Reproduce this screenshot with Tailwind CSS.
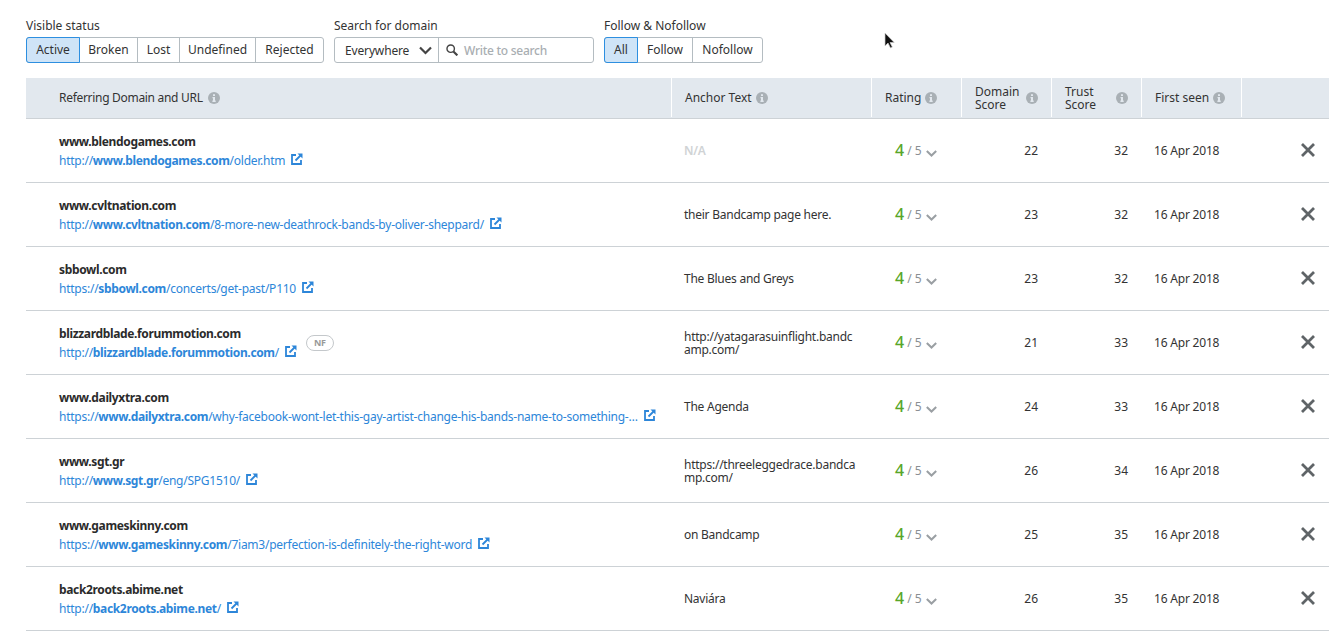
<!DOCTYPE html>
<html lang="en">
<head>
    <meta charset="UTF-8">
    <title>Backlinks</title>
    <script src="https://cdn.jsdelivr.net/npm/@tailwindcss/browser@4"></script>
</head>
<body class="relative h-[634px] overflow-hidden bg-white font-['Noto_Sans',sans-serif] text-[12px] text-[#333]">
    <!-- filters -->
    <div class="flex pl-[26px] pt-[18px] h-[78px]">
        <div class="w-[308px]">
            <div class="h-[19px] leading-[15px]">Visible status</div>
            <div class="flex h-[26px] w-[298px] rounded-[3px] border border-[#b4bcc1] leading-[24px] text-center">
                <div class="w-[54px] -my-px -ml-px rounded-l-[3px] border border-[#2d8fe0] bg-[#cfe4f7] leading-[24px]">Active</div>
                <div class="w-[58px] border-r border-[#b4bcc1]">Broken</div>
                <div class="w-[42px] border-r border-[#b4bcc1]">Lost</div>
                <div class="w-[76px] border-r border-[#b4bcc1]">Undefined</div>
                <div class="flex-1">Rejected</div>
            </div>
        </div>
        <div class="w-[270px]">
            <div class="h-[19px] leading-[15px]">Search for domain</div>
            <div class="flex h-[26px] w-[260px] rounded-[3px] border border-[#b4bcc1] leading-[25px]">
                <div class="flex w-[104px] items-center justify-between border-r border-[#b4bcc1] pl-[10px] pr-[6px] tracking-[-0.15px]">
                    <span>Everywhere</span>
                    <svg width="13" height="9" viewBox="0 0 13 9" fill="none" stroke="#444" stroke-width="2.200"><path d="M1 1.500l5.500 5.500 5.500-5.500"/></svg>
                </div>
                <div class="flex flex-1 items-center pl-[7px] font-medium tracking-[-0.27px] text-[#a9aeb2]">
                    <svg width="12" height="12" viewBox="0 0 11 11" fill="none" stroke="#444" stroke-width="1.300" class="mr-[6px]"><circle cx="4.300" cy="4.300" r="3.400"/><path stroke-width="2" d="M6.800 6.800l3.600 3.600"/></svg>
                    Write to search
                </div>
            </div>
        </div>
        <div>
            <div class="h-[19px] leading-[15px]">Follow &amp; Nofollow</div>
            <div class="flex h-[26px] w-[159px] rounded-[3px] border border-[#b4bcc1] leading-[24px] text-center">
                <div class="w-[34px] -my-px -ml-px rounded-l-[3px] border border-[#2d8fe0] bg-[#cfe4f7]">All</div>
                <div class="w-[55px] border-r border-[#b4bcc1]">Follow</div>
                <div class="flex-1">Nofollow</div>
            </div>
        </div>
    </div>

    <!-- table -->
    <div class="ml-[26px] w-[1303px]">
        <div class="grid h-[41px] grid-cols-[646px_200px_90px_90px_90px_100px_87px] border-b border-[#cdd2d6] bg-[#e2e8ee] pb-px leading-[13px]">
            <div class="flex items-center border-r border-white pl-[33px] tracking-[-0.3px]">Referring Domain and URL<svg class="ml-[5px] size-[12px]" viewBox="0 0 12 12"><circle cx="6" cy="6" r="6" fill="#a9b0b5"/><path fill="#e2e8ee" d="M5 2.200h2v1.700H5zM4.500 5h2.500v3.600h.7V10H4.400V8.600H5V6.300H4.500z"/></svg></div>
            <div class="flex items-center border-r border-white pl-[13px]">Anchor Text<svg class="ml-[4px] size-[12px]" viewBox="0 0 12 12"><circle cx="6" cy="6" r="6" fill="#a9b0b5"/><path fill="#e2e8ee" d="M5 2.200h2v1.700H5zM4.500 5h2.500v3.600h.7V10H4.400V8.600H5V6.300H4.500z"/></svg></div>
            <div class="flex items-center border-r border-white pl-[13px]">Rating<svg class="ml-[4px] size-[12px]" viewBox="0 0 12 12"><circle cx="6" cy="6" r="6" fill="#a9b0b5"/><path fill="#e2e8ee" d="M5 2.200h2v1.700H5zM4.500 5h2.500v3.600h.7V10H4.400V8.600H5V6.300H4.500z"/></svg></div>
            <div class="flex items-center justify-between border-r border-white pl-[13px] pr-[13px]"><span class="w-[50px]">Domain Score</span><svg class="size-[12px]" viewBox="0 0 12 12"><circle cx="6" cy="6" r="6" fill="#a9b0b5"/><path fill="#e2e8ee" d="M5 2.200h2v1.700H5zM4.500 5h2.500v3.600h.7V10H4.400V8.600H5V6.300H4.500z"/></svg></div>
            <div class="flex items-center justify-between border-r border-white pl-[13px] pr-[13px]"><span class="w-[40px]">Trust Score</span><svg class="size-[12px]" viewBox="0 0 12 12"><circle cx="6" cy="6" r="6" fill="#a9b0b5"/><path fill="#e2e8ee" d="M5 2.200h2v1.700H5zM4.500 5h2.500v3.600h.7V10H4.400V8.600H5V6.300H4.500z"/></svg></div>
            <div class="flex items-center border-r border-white pl-[13px]">First seen<svg class="ml-[4px] size-[12px]" viewBox="0 0 12 12"><circle cx="6" cy="6" r="6" fill="#a9b0b5"/><path fill="#e2e8ee" d="M5 2.200h2v1.700H5zM4.500 5h2.500v3.600h.7V10H4.400V8.600H5V6.300H4.500z"/></svg></div>
            <div></div>
        </div>
        <div id="rows"></div>
    </div>

    <!-- mouse pointer -->
    <svg class="absolute left-[884px] top-[32px]" width="12" height="18" viewBox="0 0 12 18"><path d="M1 1v13l3-3 2.500 5 1.800-.9L6 10.500h4.200z" fill="#111" stroke="#ccc" stroke-width=".7"/></svg>

    <script>
        const rows = [
            ["www.blendogames.com", "http://", "www.blendogames.com", "/older.htm", "", "22", "32"],
            ["www.cvltnation.com", "http://", "www.cvltnation.com", "/8-more-new-deathrock-bands-by-oliver-sheppard/", "their Bandcamp page here.", "23", "32"],
            ["sbbowl.com", "https://", "sbbowl.com", "/concerts/get-past/P110", "The Blues and Greys", "23", "32"],
            ["blizzardblade.forummotion.com", "http://", "blizzardblade.forummotion.com", "/", "http://yatagarasuinflight.bandcamp.com/", "21", "33", true],
            ["www.dailyxtra.com", "https://", "www.dailyxtra.com", "/why-facebook-wont-let-this-gay-artist-change-his-bands-name-to-something-…", "The Agenda", "24", "33"],
            ["www.sgt.gr", "http://", "www.sgt.gr", "/eng/SPG1510/", "https://threeleggedrace.bandcamp.com/", "26", "34"],
            ["www.gameskinny.com", "https://", "www.gameskinny.com", "/7iam3/perfection-is-definitely-the-right-word", "on Bandcamp", "25", "35"],
            ["back2roots.abime.net", "http://", "back2roots.abime.net", "/", "Naviára", "26", "35"]
        ];
        document.getElementById("rows").innerHTML = rows.map(r => `
            <div class="grid h-[64px] grid-cols-[646px_200px_90px_90px_90px_100px_87px] items-center border-b border-[#cdd2d6]">
                <div class="pl-[33px]">
                    <div class="font-bold leading-[19px] tracking-[-0.35px] text-[#2b2b2b]">${r[0]}</div>
                    <div class="flex items-center leading-[19px] tracking-[-0.25px] text-[#2d86d9]">
                        <span class="whitespace-nowrap">${r[1]}<b class="tracking-[-0.35px]">${r[2]}</b>${r[3]}</span>
                        <svg class="ml-[6px] -mt-[3px] size-[12px]" viewBox="0 0 12 12" fill="none" stroke="#2d86d9" stroke-width="1.800"><path d="M5 2H1v9h9V7"/><path d="M4.500 7.500L9.500 2.500"/><path fill="#2d86d9" stroke="none" d="M6.500 .500H11.500V5.500z"/></svg>
                        ${r[7] ? '<span class="ml-[9px] -mt-[19px] h-[16px] rounded-full border border-[#c4c8cb] px-[7px] text-[9px] font-bold leading-[14px] text-[#999]">NF</span>' : ''}
                    </div>
                </div>
                <div class="break-all pl-[12px] pr-[14px] leading-[13px] tracking-[-0.25px] ${r[4] ? '' : 'font-semibold text-[#d0d3d5]'}">${r[4] || 'N/A'}</div>
                <div class="flex items-center pl-[23px]">
                    <span class="text-[16px] font-medium leading-[15px] text-[#58a62a]">4</span>
                    <span class="ml-[3px] text-[#8a8f93]">/ 5</span>
                    <svg class="ml-[4px] mt-[5px]" width="11" height="7" viewBox="0 0 11 7" fill="none" stroke="#9a9fa3" stroke-width="2"><path d="M.800 1l4.700 4.500L10.200 1"/></svg>
                </div>
                <div class="pr-[14px] text-right">${r[5]}</div>
                <div class="pr-[14px] text-right">${r[6]}</div>
                <div class="pl-[12px] tracking-[-0.2px]">16 Apr 2018</div>
                <div class="flex justify-end pr-[14px]">
                    <svg class="-mt-[1px]" width="14" height="14" viewBox="0 0 14 14" fill="none" stroke="#5f6467" stroke-width="2.800"><path d="M1 1l12 12M13 1L1 13"/></svg>
                </div>
            </div>`).join("");
    </script>
</body>
</html>
